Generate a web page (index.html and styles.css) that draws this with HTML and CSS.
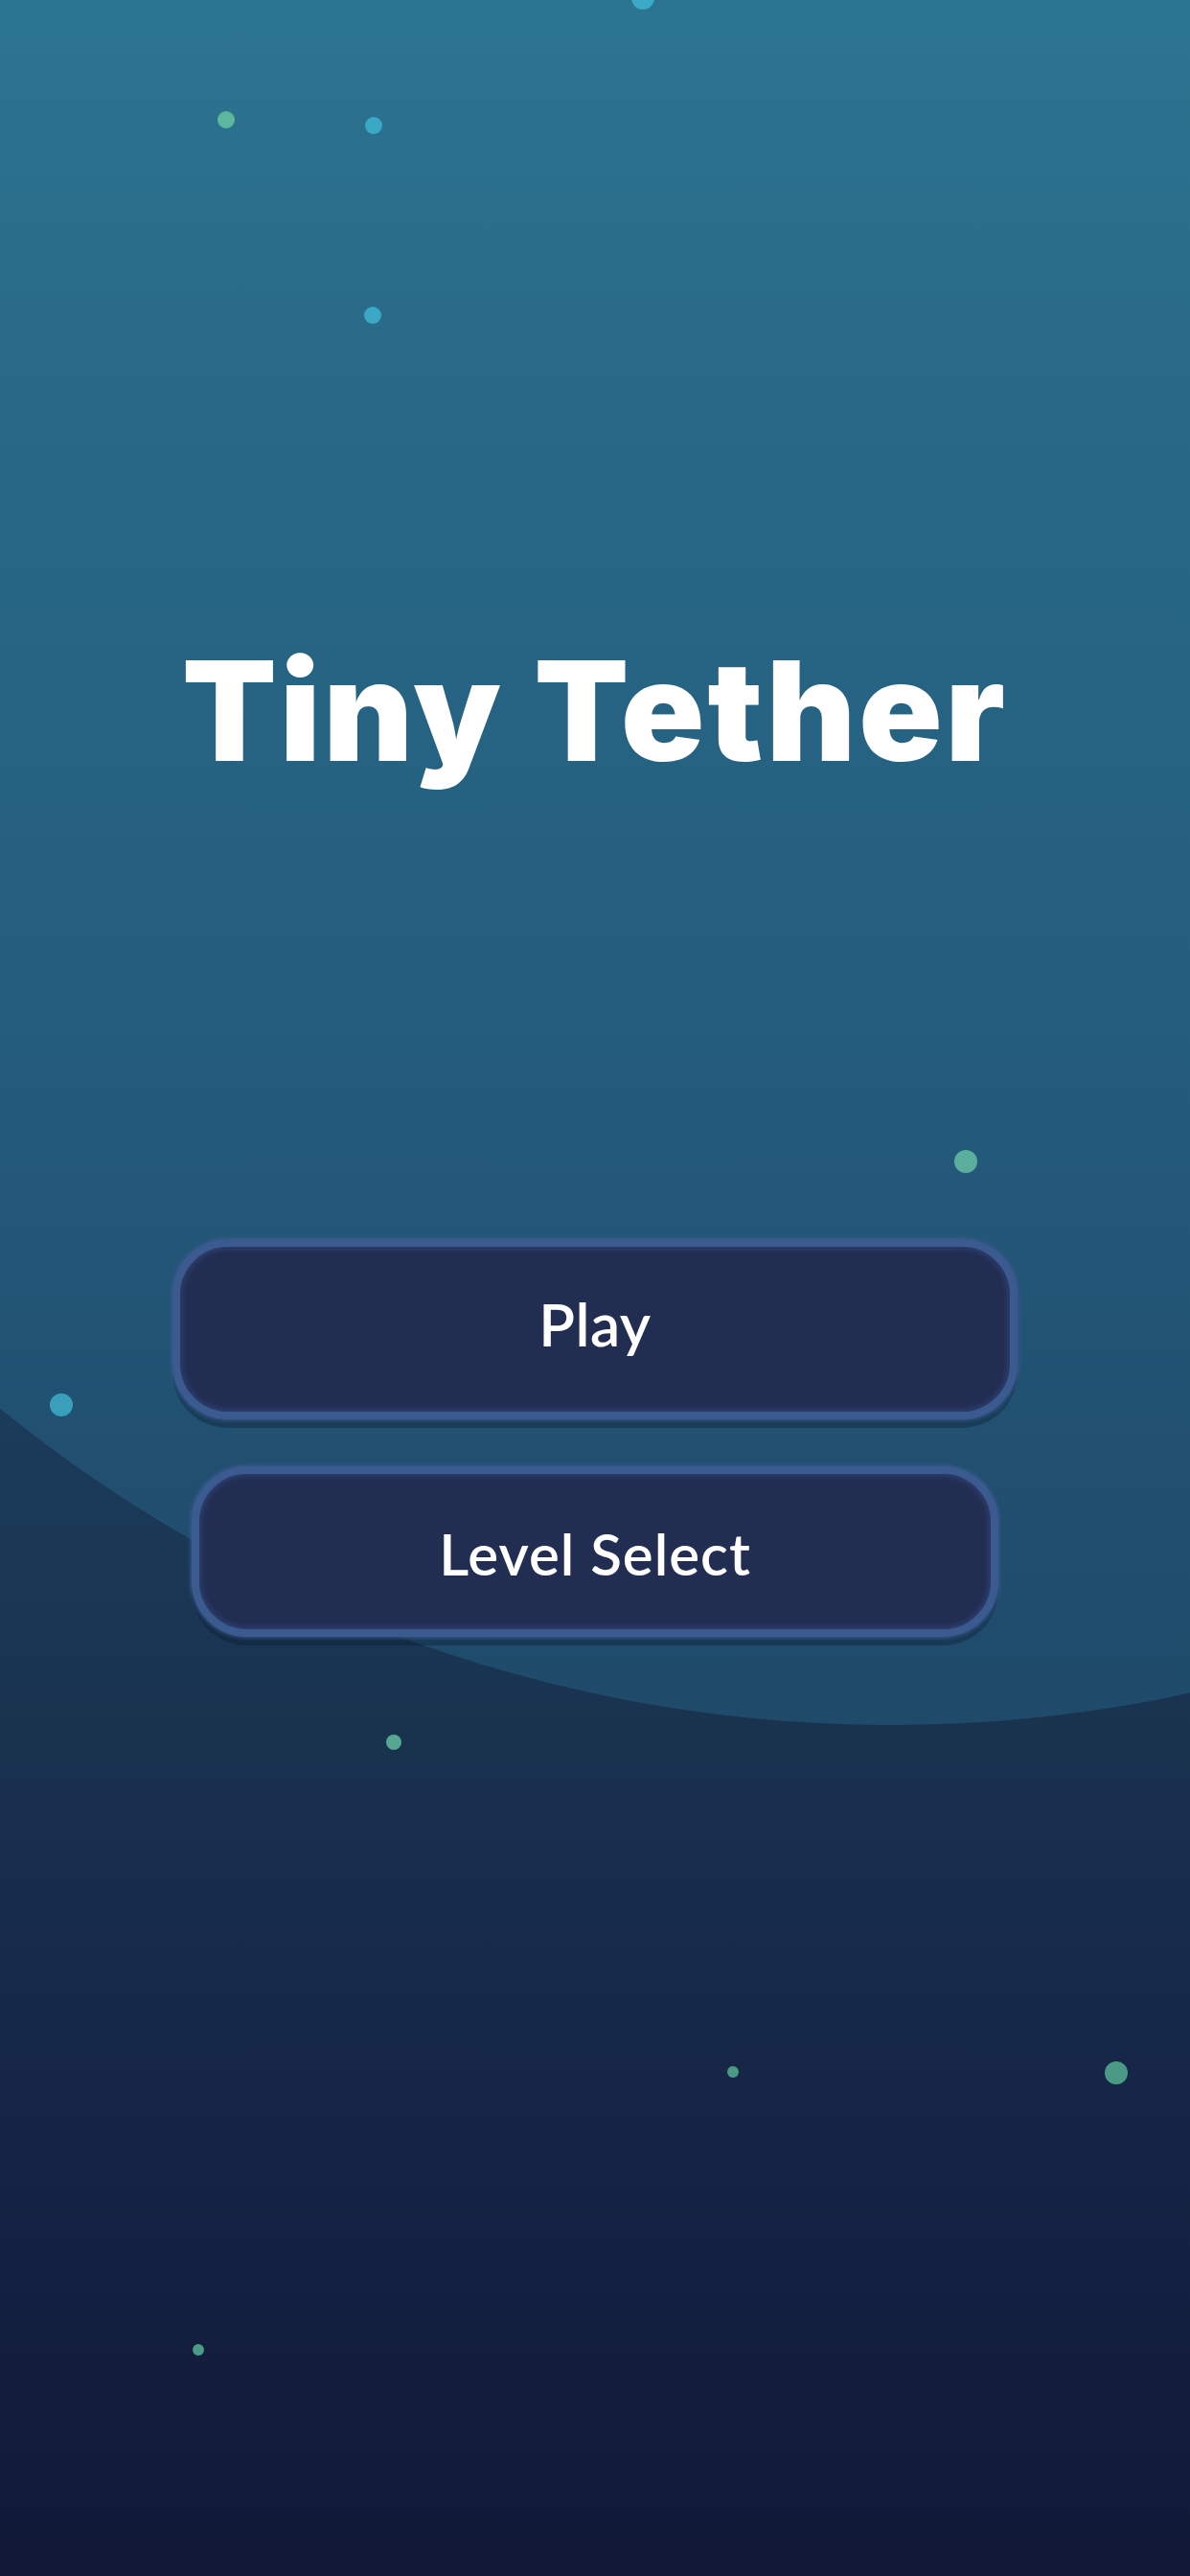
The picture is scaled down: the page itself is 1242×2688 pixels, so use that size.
FILE: index.html
```html
<!DOCTYPE html>
<html lang="en">
<head>
<meta charset="utf-8">
<title>Tiny Tether</title>
<link rel="stylesheet" href="styles.css">
</head>
<body>
<div class="scene">
  <div class="glow"></div>
  <span class="dot d1"></span>
  <span class="dot d2"></span>
  <span class="dot d3"></span>
  <span class="dot d4"></span>
  <span class="dot d5"></span>
  <span class="dot d6"></span>
  <span class="dot d7"></span>
  <span class="dot d8"></span>
  <span class="dot d9"></span>
  <span class="dot d10"></span>
  <main class="menu">
    <h1 class="title">Tiny Tether</h1>
    <button class="btn btn-play">Play</button>
    <button class="btn btn-level">Level Select</button>
  </main>
</div>
</body>
</html>
```

FILE: styles.css
```css
html, body {
  margin: 0;
  padding: 0;
}
body {
  width: 1242px;
  height: 2688px;
  overflow: hidden;
  font-family: Lato, "Noto Sans", sans-serif;
}
.scene {
  position: relative;
  width: 1242px;
  height: 2688px;
  overflow: hidden;
  background: linear-gradient(to bottom, #1f4466 0px, #1b3b5b 1470px, #19334f 1800px, #172b4b 2000px, #131f40 2400px, #111838 2688px);
}
.glow {
  position: absolute;
  left: -545px;
  top: -1150px;
  width: 2950px;
  height: 2950px;
  border-radius: 50%;
  background: linear-gradient(to bottom, #2d7794 35%, #2c7592 39%, #296b89 50%, #245c7c 76%, #214f70 91%, #1f4a6a 100%);
}
.dot {
  position: absolute;
  border-radius: 50%;
  background: #3ba7c5;
}
.d1 { left: 659px; top: -14px; width: 24px; height: 24px; background: #3ba9c7; }
.d2 { left: 227px; top: 116px; width: 18px; height: 18px; background: #5bb89e; }
.d3 { left: 381px; top: 122px; width: 18px; height: 18px; background: #3ba8c6; }
.d4 { left: 380px; top: 320px; width: 18px; height: 18px; background: #3ba8c6; }
.d5 { left: 996px; top: 1200px; width: 24px; height: 24px; background: #5aae9c; }
.d6 { left: 52px; top: 1454px; width: 24px; height: 24px; background: #3a9fbb; }
.d7 { left: 403px; top: 1810px; width: 16px; height: 16px; background: #55a88f; }
.d8 { left: 759px; top: 2156px; width: 12px; height: 12px; background: #4b9a86; }
.d9 { left: 1153px; top: 2151px; width: 24px; height: 24px; background: #4b9a86; }
.d10 { left: 201px; top: 2446px; width: 12px; height: 12px; background: #4b9a86; }

.menu {
  position: relative;
  display: flex;
  flex-direction: column;
  align-items: center;
  padding-top: 670px;
}
.title {
  margin: 0;
  font-family: Inter, "Open Sans", sans-serif;
  font-weight: 900;
  font-size: 144px;
  line-height: 1;
  letter-spacing: 3px;
  color: #ffffff;
}
.btn {
  box-sizing: border-box;
  display: flex;
  align-items: center;
  justify-content: center;
  font-family: Lato, "Noto Sans", sans-serif;
  font-weight: 600;
  color: #ffffff;
  background: #222d52;
  border: 8px solid #3b5a8f;
  border-radius: 58px;
  box-shadow:
    0 0 4px 1px #3b5a8f,
    inset 0 0 6px 2px #2e4272,
    0 9px 0 rgba(10, 22, 38, 0.32);
  padding: 0;
  cursor: pointer;
}
.btn-play {
  margin-top: 479px;
  width: 882px;
  height: 188px;
  font-size: 62px;
  letter-spacing: 0.5px;
  padding-bottom: 12px;
}
.btn-level {
  margin-top: 49px;
  width: 842px;
  height: 178px;
  font-size: 60px;
  letter-spacing: 1px;
  padding-top: 4px;
}
```
